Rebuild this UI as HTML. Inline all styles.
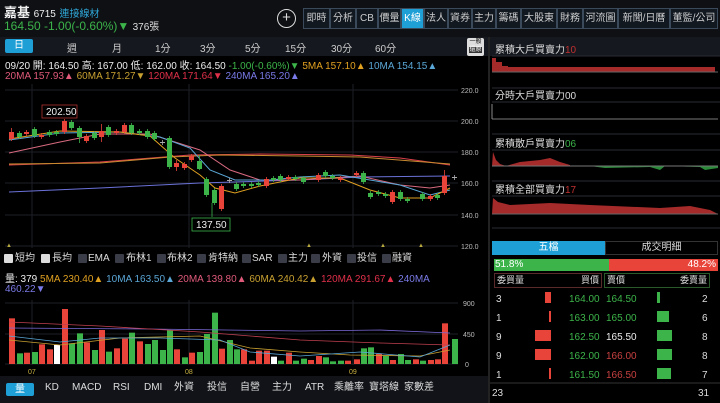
<!DOCTYPE html>
<html><head><meta charset="utf-8"><style>
*{margin:0;padding:0;box-sizing:border-box}
body{width:720px;height:403px;background:#000;overflow:hidden;font-family:"Liberation Sans","Noto Sans CJK TC",sans-serif;color:#ddd;position:relative}
.a{position:absolute;white-space:nowrap}
.btn{position:absolute;top:8px;height:21px;border:1px solid #3a4a5a;background:#111820;color:#ccc;font-size:10px;line-height:19px;text-align:center}
.tab{position:absolute;top:40px;font-size:10px;color:#ccc}
.cb{position:absolute;top:254px;width:9px;height:9px;background:#3a3d48;border-radius:1px}
.cl{position:absolute;top:252px;font-size:10px;color:#ddd;line-height:13px;height:13px}
.bt{position:absolute;top:381px;font-size:10px;color:#ddd;line-height:13px;height:13px}
</style></head><body>
<div class="a" style="left:0;top:0;width:720px;height:37px;background:#0e1014"></div>
<div class="a" style="left:4px;top:2px;font-size:13px;color:#eee;font-weight:bold">嘉基 <span style="font-size:10px;font-weight:normal">6715</span> <span style="font-size:10px;font-weight:normal;color:#2fa6d6">連接線材</span></div>
<div class="a" style="left:4px;top:18px;font-size:12px;color:#3cb44a">164.50 -1.00(-0.60%)▼ <span style="color:#ddd;font-size:10px">376張</span></div>
<div class="a" style="left:277px;top:9px;width:19px;height:19px;border:1.5px solid #ddd;border-radius:50%;color:#ddd;font-size:15px;line-height:15px;text-align:center">+</div>
<div class="btn" style="left:303px;width:27px">即時</div>
<div class="btn" style="left:330px;width:26px">分析</div>
<div class="btn" style="left:356px;width:22px">CB</div>
<div class="btn" style="left:378px;width:23px">價量</div>
<div class="btn" style="left:401px;width:23px;background:#1e9fd6;color:#fff">K線</div>
<div class="btn" style="left:424px;width:24px">法人</div>
<div class="btn" style="left:448px;width:24px">資券</div>
<div class="btn" style="left:472px;width:24px">主力</div>
<div class="btn" style="left:496px;width:25px">籌碼</div>
<div class="btn" style="left:521px;width:36px">大股東</div>
<div class="btn" style="left:557px;width:26px">財務</div>
<div class="btn" style="left:583px;width:35px">河流圖</div>
<div class="btn" style="left:618px;width:52px">新聞/日曆</div>
<div class="btn" style="left:670px;width:48px">董監/公司</div>

<div class="a" style="left:0;top:37px;width:488px;height:19px;background:#15181e"></div>
<div class="a" style="left:5px;top:39px;width:28px;height:14px;background:#1e9fd6;border-radius:2px;color:#fff;font-size:10px;text-align:center;line-height:14px">日</div>
<div class="tab" style="left:67px">週</div><div class="tab" style="left:112px">月</div><div class="tab" style="left:155px">1分</div><div class="tab" style="left:200px">3分</div><div class="tab" style="left:245px">5分</div><div class="tab" style="left:285px">15分</div><div class="tab" style="left:331px">30分</div><div class="tab" style="left:375px">60分</div>
<div class="a" style="left:467px;top:38px;width:17px;height:18px;background:#ddd;border-radius:2px;color:#000;font-size:6px;line-height:8px;text-align:center">一般<br><span style="background:#333;color:#fff">還原</span></div>
<div class="a" style="left:488px;top:37px;width:2px;height:366px;background:#222"></div>

<div class="a" style="left:5px;top:57px;font-size:10px;color:#eee">09/20 開: 164.50 高: 167.00 低: 162.00 收: 164.50 <span style="color:#3cb44a">-1.00(-0.60%)▼</span> <span style="color:#e0a020">5MA 157.10▲</span> <span style="color:#5aa6d6">10MA 154.15▲</span></div>
<div class="a" style="left:5px;top:71px;font-size:10px"><span style="color:#e05a7a">20MA 157.93▲</span> <span style="color:#c8a030">60MA 171.27▼</span> <span style="color:#e0304a">120MA 171.64▼</span> <span style="color:#7a7ae8">240MA 165.20▲</span></div>

<svg class="a" style="left:0;top:0" width="488" height="403">
<g stroke="#1c1f26" stroke-width="1">
<line x1="5" y1="90" x2="458" y2="90"/><line x1="5" y1="121" x2="458" y2="121"/><line x1="5" y1="152" x2="458" y2="152"/><line x1="5" y1="183" x2="458" y2="183"/><line x1="5" y1="215" x2="458" y2="215"/><line x1="5" y1="246" x2="458" y2="246"/>
<line x1="32" y1="84" x2="32" y2="248"/><line x1="189" y1="84" x2="189" y2="248"/><line x1="353" y1="84" x2="353" y2="248"/>
<line x1="32" y1="300" x2="32" y2="365"/><line x1="189" y1="300" x2="189" y2="365"/><line x1="353" y1="300" x2="353" y2="365"/>
<line x1="5" y1="303" x2="458" y2="303"/><line x1="5" y1="334" x2="458" y2="334"/><line x1="5" y1="364" x2="458" y2="364"/>
</g>
<g font-size="7" fill="#bbb"><text x="461" y="93">220.0</text><text x="461" y="124">200.0</text><text x="461" y="155">180.0</text><text x="461" y="186">160.0</text><text x="461" y="218">140.0</text><text x="461" y="249">120.0</text>
<text x="463" y="306">900</text><text x="463" y="337">450</text><text x="465" y="367">0</text></g>
<g fill="none" stroke-width="1">
<polyline stroke="#6b72d8" points="9,192 100,188 200,183 300,180 360,177 450,176"/>
<polyline stroke="#d8404a" points="9,165 100,162 190,155 260,154 350,155 400,158 450,165"/>
<polyline stroke="#c88a30" points="9,164 100,163 170,157 220,155 300,156 360,157 450,164"/>
<polyline stroke="#d86a80" points="9,153 60,142 100,134 150,134 200,150 230,170 260,180 300,180 330,178 360,176 400,185 430,188 450,185"/>
<polyline stroke="#5aa6d6" points="9,140 60,133 120,132 160,137 190,148 210,170 235,180 270,180 300,177 340,175 370,180 400,185 430,195 450,190"/>
<polyline stroke="#e0a020" points="9,139 60,131 120,132 150,136 175,158 200,175 215,188 235,193 260,186 300,178 340,178 370,190 400,198 430,198 450,188"/>
</g>
<g id="k"></g>
<rect x="42" y="105" width="35" height="13" fill="#000" stroke="#b03030" stroke-width=".8"/><text x="46" y="115" font-size="10" fill="#eee">202.50</text>
<line x1="212" y1="203" x2="212" y2="217" stroke="#3cb44a" stroke-width=".8"/>
<rect x="192" y="218" width="38" height="13" fill="#000" stroke="#3cb44a" stroke-width=".8"/><text x="196" y="228" font-size="10" fill="#eee">137.50</text>
<g fill="#b8a840" font-size="6"><text x="6" y="247">▲</text><text x="306" y="247">▲</text><text x="380" y="247">▲</text><text x="418" y="247">▲</text></g>
<g id="v"></g>
<g fill="none" stroke-width=".8">
<polyline stroke="#7a6ad8" points="9,328 150,329 300,331 380,330 450,333"/>
<polyline stroke="#c04050" points="9,322 100,326 200,332 300,340 380,343 450,345"/>
<polyline stroke="#c8a030" points="9,340 60,345 120,338 200,336 250,348 300,352 350,355 420,356 450,350"/>
<polyline stroke="#5aa6d6" points="9,336 60,342 100,338 160,338 220,340 250,352 300,356 360,352 420,357 450,345"/>
</g>
<g fill="#c8b040" font-size="7"><text x="28" y="374">07</text><text x="185" y="374">08</text><text x="349" y="374">09</text></g>
</svg>

<div class="cb" style="left:4px;background:#ddd"></div><div class="cl" style="left:15px">短均</div>
<div class="cb" style="left:41px;background:#ddd"></div><div class="cl" style="left:52px">長均</div>
<div class="cb" style="left:78px"></div><div class="cl" style="left:88px">EMA</div>
<div class="cb" style="left:115px"></div><div class="cl" style="left:126px">布林1</div>
<div class="cb" style="left:157px"></div><div class="cl" style="left:167px">布林2</div>
<div class="cb" style="left:197px"></div><div class="cl" style="left:208px">肯特納</div>
<div class="cb" style="left:242px"></div><div class="cl" style="left:252px">SAR</div>
<div class="cb" style="left:278px"></div><div class="cl" style="left:288px">主力</div>
<div class="cb" style="left:311px"></div><div class="cl" style="left:322px">外資</div>
<div class="cb" style="left:347px"></div><div class="cl" style="left:357px">投信</div>
<div class="cb" style="left:382px"></div><div class="cl" style="left:392px">融資</div>
<div class="a" style="left:5px;top:270px;font-size:10px;color:#eee">量: 379 <span style="color:#e0a020">5MA 230.40▲</span> <span style="color:#5aa6d6">10MA 163.50▲</span> <span style="color:#e05a7a">20MA 139.80▲</span> <span style="color:#c8a030">60MA 240.42▲</span> <span style="color:#e0304a">120MA 291.67▲</span> <span style="color:#7a7ae8">240MA</span></div>
<div class="a" style="left:5px;top:284px;font-size:10px;color:#7a7ae8">460.22▼</div>
<div class="a" style="left:0;top:376px;width:488px;height:27px;background:#111318"></div>
<div class="a" style="left:6px;top:383px;width:28px;height:13px;background:#1e9fd6;border-radius:2px;color:#fff;font-size:10px;text-align:center;line-height:13px">量</div>
<div class="bt" style="left:45px">KD</div><div class="bt" style="left:72px">MACD</div><div class="bt" style="left:113px">RSI</div><div class="bt" style="left:144px">DMI</div><div class="bt" style="left:174px">外資</div><div class="bt" style="left:207px">投信</div><div class="bt" style="left:240px">自營</div><div class="bt" style="left:272px">主力</div><div class="bt" style="left:305px">ATR</div><div class="bt" style="left:334px">乘離率</div><div class="bt" style="left:369px">寶塔線</div><div class="bt" style="left:404px">家數差</div>

<div class="a" style="left:490px;top:37px;width:230px;height:19px;background:#15181e"></div>
<svg class="a" style="left:490px;top:40px" width="230" height="196">
<g stroke="#2a2d34" stroke-width="1"><line x1="2" y1="16" x2="230" y2="16"/><line x1="2" y1="48" x2="230" y2="48"/><line x1="2" y1="62" x2="230" y2="62"/><line x1="2" y1="94" x2="230" y2="94"/><line x1="2" y1="110" x2="230" y2="110"/><line x1="2" y1="141" x2="230" y2="141"/><line x1="2" y1="156" x2="230" y2="156"/><line x1="2" y1="188" x2="230" y2="188"/></g>
<path d="M2,32 L2,18 L6,18 L6,22 L12,22 L12,26 L18,26 L18,27 L225,27 L225,32 Z" fill="#a52a2a"/>
<line x1="2" y1="32" x2="228" y2="32" stroke="#666"/>
<line x1="2" y1="79" x2="228" y2="79" stroke="#777"/><line x1="2" y1="64" x2="2" y2="79" stroke="#888"/>
<path d="M2,126 L3,112 L6,120 L10,124 L16,126 L30,122 L50,120 L60,118 L70,122 L80,125 L80,126 Z" fill="#a52a2a"/>
<path d="M100,126 L115,128 L160,127 L170,130 L175,126 L210,127 L215,130 L228,128 L228,126 Z" fill="#2a8a3a"/>
<line x1="2" y1="126" x2="228" y2="126" stroke="#777"/>
<path d="M2,174 L3,158 L8,162 L20,165 L60,163 L100,165 L170,168 L200,166 L220,170 L228,174 Z" fill="#a52a2a"/>
<line x1="2" y1="174" x2="228" y2="174" stroke="#666"/>
<g font-size="10" fill="#ddd"><text x="5" y="13">累積大戶買賣力<tspan fill="#c03030">10</tspan></text><text x="5" y="59">分時大戶買賣力00</text><text x="5" y="107">累積散戶買賣力<tspan fill="#3cb44a">06</tspan></text><text x="5" y="153">累積全部買賣力<tspan fill="#c03030">17</tspan></text></g>
</svg>
<div class="a" style="left:492px;top:241px;width:113px;height:14px;background:#1e9fd6;color:#fff;font-size:10px;text-align:center;line-height:14px">五檔</div>
<div class="a" style="left:605px;top:241px;width:113px;height:14px;border:1px solid #333;color:#ddd;font-size:10px;text-align:center;line-height:12px">成交明細</div>
<div class="a" style="left:494px;top:259px;width:115px;height:12px;background:#3cb44a;color:#fff;font-size:10px;line-height:12px;padding-left:1px">51.8%</div>
<div class="a" style="left:609px;top:259px;width:109px;height:12px;background:#e8443a;color:#fff;font-size:10px;line-height:12px;text-align:right;padding-right:2px">48.2%</div>
<div class="a" style="left:494px;top:273px;width:108px;height:15px;border:1px solid #5a2a2a;font-size:9px;color:#ddd;line-height:13px;padding:0 2px">委買量<span style="float:right">買價</span></div>
<div class="a" style="left:604px;top:273px;width:106px;height:15px;border:1px solid #2a5a2a;font-size:9px;color:#ddd;line-height:13px;padding:0 2px">賣價<span style="float:right">委賣量</span></div>
<svg class="a" style="left:490px;top:288px" width="230" height="115" font-size="10">
<g fill="#ddd"><text x="6" y="14">3</text><text x="6" y="33">1</text><text x="6" y="52">9</text><text x="6" y="71">9</text><text x="6" y="90">1</text>
<text x="212" y="14">2</text><text x="212" y="33">6</text><text x="212" y="52">8</text><text x="212" y="71">8</text><text x="212" y="90">7</text>
<text x="2" y="108">23</text><text x="208" y="108">31</text></g>
<g fill="#e8443a"><rect x="55" y="4" width="6" height="11"/><rect x="59" y="23" width="2" height="11"/><rect x="45" y="42" width="16" height="11"/><rect x="45" y="61" width="16" height="11"/><rect x="59" y="80" width="2" height="11"/></g>
<g fill="#3cb44a"><rect x="167" y="4" width="3" height="11"/><rect x="167" y="23" width="12" height="11"/><rect x="167" y="42" width="15" height="11"/><rect x="167" y="61" width="15" height="11"/><rect x="167" y="80" width="14" height="11"/></g>
<g fill="#3cb44a"><text x="79" y="14">164.00</text><text x="79" y="33">163.00</text><text x="79" y="52">162.50</text><text x="79" y="71">162.00</text><text x="79" y="90">161.50</text><text x="116" y="14">164.50</text><text x="116" y="33">165.00</text></g>
<text x="116" y="52" fill="#eee">165.50</text><text x="116" y="71" fill="#c84040">166.00</text><text x="116" y="90" fill="#c84040">166.50</text>
<line x1="0" y1="95" x2="230" y2="95" stroke="#333"/>
</svg>
<script>
var K=[[9,'r',132,139,128,141],[17,'g',133,137],[24,'r',132,134],[32,'g',129,136],[39,'r',135,137],[47,'g',132,135],[54,'g',132,134],[62,'r',121,132],[69,'g',122,128],[77,'g',128,137,126,143],[84,'r',136,141],[92,'g',133,138],[99,'r',131,137,124,142],[106,'g',127,135],[114,'r',131,133],[122,'r',125,132],[129,'g',125,133],[137,'g',131,133],[145,'g',131,137],[152,'g',133,139],[160,'c',142,143],[167,'g',138,167],[174,'r',163,167,160,171],[182,'r',164,168],[189,'r',156,160],[197,'g',161,169,155,170],[204,'g',179,195],[212,'g',190,203],[219,'r',186,209],[227,'c',180,181],[234,'g',184,189],[241,'g',184,186],[249,'g',184,186],[256,'g',183,185],[264,'r',179,186],[271,'g',178,180],[278,'g',176,180],[286,'r',177,179],[293,'g',177,179],[301,'g',178,182],[316,'r',175,180],[323,'g',172,176],[330,'g',176,178],[338,'r',178,180],[354,'r',173,175],[361,'g',173,182],[368,'g',193,197],[376,'g',192,194],[383,'g',194,196],[390,'r',192,202],[398,'g',192,199],[405,'g',199,201],[420,'g',194,199],[428,'r',196,199],[435,'g',195,198],[442,'r',176,193,170,195],[452,'c',177,178]];
var s='';K.forEach(function(c){var col=c[1]=='r'?'#e8443a':(c[1]=='g'?'#3cb44a':'#aaa');var lo=c[4]||c[2]-2,hi=c[5]||c[3]+2;s+='<line x1="'+(c[0]+2.5)+'" y1="'+lo+'" x2="'+(c[0]+2.5)+'" y2="'+hi+'" stroke="'+col+'" stroke-width=".8"/>';s+='<rect x="'+c[0]+'" y="'+c[2]+'" width="5" height="'+Math.max(1,c[3]-c[2])+'" fill="'+col+'"/>';});
document.getElementById('k').innerHTML=s;
var V=[[9,'r',235],[17,'g',340],[24,'r',338],[32,'g',336],[39,'r',313],[47,'r',328],[54,'w',315],[62,'r',207],[69,'g',310],[77,'g',280],[84,'r',307],[92,'g',330],[99,'r',270],[106,'g',335],[114,'r',325],[122,'r',296],[129,'g',278],[137,'r',304],[145,'g',312],[152,'g',300],[160,'g',330],[167,'g',270],[174,'r',328],[182,'g',352],[189,'r',338],[197,'g',336],[204,'g',282],[212,'g',218],[219,'r',326],[227,'g',300],[234,'g',328],[241,'r',328],[249,'r',362],[256,'r',332],[264,'r',332],[271,'w',350],[278,'g',362],[286,'r',338],[293,'g',362],[301,'g',356],[308,'r',360],[316,'r',348],[323,'g',352],[330,'g',364],[338,'g',362],[345,'r',362],[354,'r',358],[361,'g',325],[368,'g',322],[376,'r',342],[383,'g',348],[390,'r',360],[398,'g',342],[405,'g',360],[413,'r',358],[420,'g',362],[428,'r',360],[435,'r',358],[442,'r',250],[452,'g',297]];
s='';V.forEach(function(v){var col=v[1]=='r'?'#e8443a':(v[1]=='g'?'#3cb44a':'#fff');var t=240+v[2]/3;s+='<rect x="'+v[0]+'" y="'+t+'" width="6" height="'+(364-t)+'" fill="'+col+'"/>';});
document.getElementById('v').innerHTML=s;
</script>
</body></html>
